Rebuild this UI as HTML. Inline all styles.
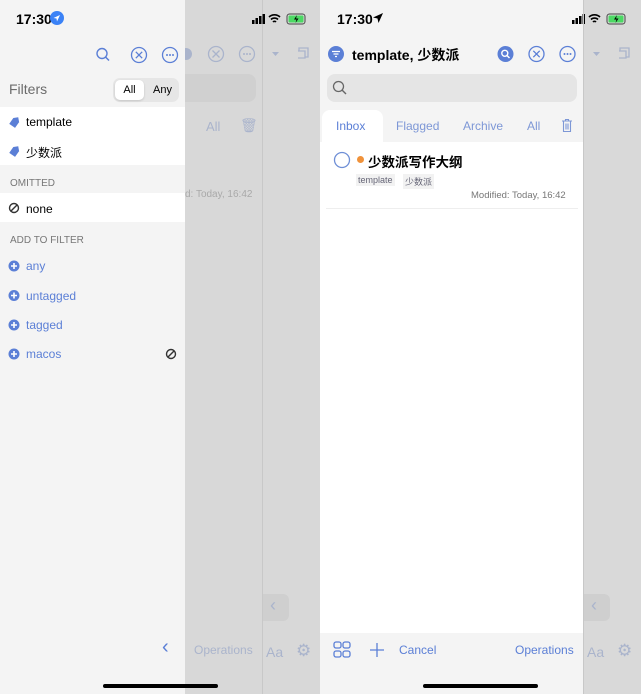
<!DOCTYPE html>
<html><head><meta charset="utf-8"><style>
*{margin:0;padding:0;box-sizing:border-box}
body{width:641px;height:694px;position:relative;overflow:hidden;background:#d9d9d9;font-family:"Liberation Sans","Noto Sans CJK SC",sans-serif;color:#000}
.a{position:absolute}
.blue{color:#5b7fd6}
.fb{color:#aab4cc}
.t{font-size:12px}
</style></head><body>
<!-- left screen -->
<div class="a" style="left:0;top:0;width:320px;height:694px;background:#d8d8d8"></div>
<div class="a" style="left:262px;top:0;width:1px;height:694px;background:#c8c8c8"></div>
<!-- faded content behind -->
<div class="a" style="left:185px;top:74px;width:71px;height:28px;background:#d0d0d0;border-radius:0 8px 8px 0"></div>
<div class="a fb" style="left:206px;top:119px;font-size:13px">All</div>
<div class="a fb" style="left:240px;top:117px;font-size:14px">🗑</div>
<div class="a" style="left:185px;top:189px;font-size:10px;color:#a9a9a9">d: Today, 16:42</div>
<div class="a fb" style="left:194px;top:643px;font-size:12px">Operations</div>
<div class="a fb" style="left:266px;top:644px;font-size:14px">Aa</div>
<div class="a fb" style="left:296px;top:641px;font-size:17px">⚙</div>
<div class="a" style="left:263px;top:594px;width:26px;height:27px;background:#cfcfcf;border-radius:0 6px 6px 0"></div>
<div class="a fb" style="left:270px;top:595px;font-size:18px">‹</div>
<svg class="a" style="left:180px;top:45px" width="140" height="20"><circle cx="6" cy="9" r="6" fill="#aab4cc"/><circle cx="36" cy="9" r="7.5" fill="none" stroke="#aab4cc" stroke-width="1.3"/><path d="M32.5 5.5l7 7M39.5 5.5l-7 7" stroke="#aab4cc" stroke-width="1.3"/><circle cx="67" cy="9" r="7.5" fill="none" stroke="#aab4cc" stroke-width="1.3"/><circle cx="64" cy="9" r="1" fill="#aab4cc"/><circle cx="67" cy="9" r="1" fill="#aab4cc"/><circle cx="70" cy="9" r="1" fill="#aab4cc"/><path d="M92 7h7l-3.5 4z" fill="#aab4cc"/><path d="M119 6v-3h9v9h-3M118 6h7v7h-7" fill="none" stroke="#aab4cc" stroke-width="1.3"/></svg>
<!-- drawer -->
<div class="a" style="left:0;top:0;width:185px;height:694px;background:#f4f4f4"></div>
<div class="a" style="left:16px;top:11px;font-size:14px;font-weight:bold">17:30</div>
<svg class="a" style="left:50px;top:11px" width="14" height="14"><circle cx="7" cy="7" r="7" fill="#3b82f6"/><path d="M10 4L3.5 7l3 .5.5 3z" fill="#fff"/></svg>
<svg class="a" style="left:252px;top:13px" width="56" height="12"><rect x="0" y="7" width="2.5" height="4" fill="#000"/><rect x="3.5" y="5" width="2.5" height="6" fill="#000"/><rect x="7" y="3" width="2.5" height="8" fill="#000"/><rect x="10.5" y="1" width="2.5" height="10" fill="#000"/><path d="M17 4a8 8 0 0 1 11 0M19 6.5a5 5 0 0 1 7 0M21 9a2 2 0 0 1 3 0" stroke="#000" stroke-width="1.6" fill="none"/><rect x="35" y="1" width="18" height="10" rx="2.5" fill="none" stroke="#444"/><rect x="36.5" y="2.5" width="15" height="7" rx="1" fill="#4cd964"/><path d="M45 2l-3 4.5h2.5l-1 3.5 3-4.5h-2.5z" fill="#000"/></svg>
<svg class="a" style="left:94px;top:46px" width="90" height="18"><circle cx="8" cy="7.5" r="5" fill="none" stroke="#5b7fd6" stroke-width="1.4"/><path d="M11.5 11l3.5 3.5" stroke="#5b7fd6" stroke-width="1.5"/><circle cx="45" cy="9" r="7.5" fill="none" stroke="#5b7fd6" stroke-width="1.3"/><path d="M41.8 5.8l6.4 6.4M48.2 5.8l-6.4 6.4" stroke="#5b7fd6" stroke-width="1.3"/><circle cx="76" cy="9" r="7.5" fill="none" stroke="#5b7fd6" stroke-width="1.3"/><circle cx="73" cy="9" r="1" fill="#5b7fd6"/><circle cx="76" cy="9" r="1" fill="#5b7fd6"/><circle cx="79" cy="9" r="1" fill="#5b7fd6"/></svg>
<div class="a" style="left:9px;top:81px;font-size:14px;color:#6b6b6b">Filters</div>
<div class="a" style="left:113px;top:78px;width:66px;height:24px;background:#e6e6e6;border-radius:7px"></div>
<div class="a" style="left:115px;top:80px;width:29px;height:20px;background:#fff;border-radius:5px;box-shadow:0 1px 2px rgba(0,0,0,.15);font-size:11px;text-align:center;line-height:20px">All</div>
<div class="a" style="left:153px;top:84px;font-size:11px">Any</div>
<div class="a" style="left:0;top:107px;width:185px;height:58px;background:#fff"></div>
<div class="a" style="left:0;top:193px;width:185px;height:29px;background:#fff"></div>
<svg class="a" style="left:8px;top:116px" width="12" height="12"><path d="M1 7L6 2h5v5l-5 5z" fill="#5b7fd6" transform="rotate(-10 6 6)"/></svg>
<div class="a t" style="left:26px;top:115px">template</div>
<svg class="a" style="left:8px;top:145px" width="12" height="12"><path d="M1 7L6 2h5v5l-5 5z" fill="#5b7fd6" transform="rotate(-10 6 6)"/></svg>
<div class="a t" style="left:26px;top:144px">少数派</div>
<div class="a" style="left:10px;top:178px;font-size:10px;color:#777">OMITTED</div>
<svg class="a" style="left:8px;top:202px" width="12" height="12"><circle cx="6" cy="6" r="4.5" fill="none" stroke="#333" stroke-width="1.4"/><path d="M3 9l6-6" stroke="#333" stroke-width="1.4"/></svg>
<div class="a t" style="left:26px;top:202px">none</div>
<div class="a" style="left:10px;top:235px;font-size:10px;color:#777">ADD TO FILTER</div>
<div id="adds"></div>
<svg class="a" style="left:8px;top:260px" width="12" height="100"><g fill="#5b7fd6"><circle cx="6" cy="6" r="5.5"/><circle cx="6" cy="35.5" r="5.5"/><circle cx="6" cy="65" r="5.5"/><circle cx="6" cy="94" r="5.5"/></g><g stroke="#fff" stroke-width="1.6"><path d="M3 6h6M6 3v6M3 35.5h6M6 32.5v6M3 65h6M6 62v6M3 94h6M6 91v6"/></g></svg>
<div class="a t blue" style="left:26px;top:259px">any</div>
<div class="a t blue" style="left:26px;top:289px">untagged</div>
<div class="a t blue" style="left:26px;top:318px">tagged</div>
<div class="a t blue" style="left:26px;top:347px">macos</div>
<svg class="a" style="left:165px;top:348px" width="12" height="12"><circle cx="6" cy="6" r="4.5" fill="none" stroke="#333" stroke-width="1.4"/><path d="M3 9l6-6" stroke="#333" stroke-width="1.4"/></svg>
<div class="a blue" style="left:162px;top:636px;font-size:20px">‹</div>
<div class="a" style="left:103px;top:684px;width:115px;height:4px;background:#000;border-radius:2px"></div>

<!-- right screen -->
<div class="a" style="left:320px;top:0;width:263px;height:694px;background:#f4f4f4"></div>
<div class="a" style="left:320px;top:142px;width:263px;height:491px;background:#fff"></div>
<div class="a" style="left:322px;top:110px;width:61px;height:34px;background:#fff;border-radius:8px 8px 0 0"></div>
<div class="a" style="left:337px;top:11px;font-size:14px;font-weight:bold">17:30</div>
<svg class="a" style="left:372px;top:12px" width="12" height="12"><path d="M11 1L1 5.5l4.5 1 1 4.5z" fill="#000"/></svg>
<svg class="a" style="left:572px;top:13px" width="56" height="12"><rect x="0" y="7" width="2.5" height="4" fill="#000"/><rect x="3.5" y="5" width="2.5" height="6" fill="#000"/><rect x="7" y="3" width="2.5" height="8" fill="#000"/><rect x="10.5" y="1" width="2.5" height="10" fill="#000"/><path d="M17 4a8 8 0 0 1 11 0M19 6.5a5 5 0 0 1 7 0M21 9a2 2 0 0 1 3 0" stroke="#000" stroke-width="1.6" fill="none"/><rect x="35" y="1" width="18" height="10" rx="2.5" fill="none" stroke="#444"/><rect x="36.5" y="2.5" width="15" height="7" rx="1" fill="#4cd964"/><path d="M45 2l-3 4.5h2.5l-1 3.5 3-4.5h-2.5z" fill="#000"/></svg>
<svg class="a" style="left:328px;top:46px" width="16" height="16"><circle cx="8" cy="8" r="8" fill="#5b7fd6"/><path d="M4 5.5h8M5.5 8h5M7 10.5h2" stroke="#fff" stroke-width="1.3"/></svg>
<div class="a" style="left:352px;top:45px;font-size:14px;font-weight:bold">template, 少数派</div>
<svg class="a" style="left:497px;top:45px" width="85" height="18"><circle cx="8.5" cy="9" r="8" fill="#5b7fd6"/><circle cx="7.8" cy="8.3" r="3" fill="none" stroke="#fff" stroke-width="1.4"/><path d="M10 10.5l2.5 2.5" stroke="#fff" stroke-width="1.5"/><circle cx="39.5" cy="9" r="7.5" fill="none" stroke="#5b7fd6" stroke-width="1.3"/><path d="M36.3 5.8l6.4 6.4M42.7 5.8l-6.4 6.4" stroke="#5b7fd6" stroke-width="1.3"/><circle cx="70.5" cy="9" r="7.5" fill="none" stroke="#5b7fd6" stroke-width="1.3"/><circle cx="67.5" cy="9" r="1" fill="#5b7fd6"/><circle cx="70.5" cy="9" r="1" fill="#5b7fd6"/><circle cx="73.5" cy="9" r="1" fill="#5b7fd6"/></svg>
<div class="a" style="left:327px;top:74px;width:250px;height:28px;background:#e5e5e5;border-radius:8px"></div>
<svg class="a" style="left:332px;top:80px" width="16" height="16"><circle cx="6.5" cy="6.5" r="5" fill="none" stroke="#666" stroke-width="1.3"/><path d="M10 10l4 4" stroke="#666" stroke-width="1.4"/></svg>
<div class="a blue" style="left:336px;top:119px;font-size:12px">Inbox</div>
<div class="a" style="left:396px;top:119px;font-size:12px;color:#7d97d6">Flagged</div>
<div class="a" style="left:463px;top:119px;font-size:12px;color:#7d97d6">Archive</div>
<div class="a" style="left:527px;top:119px;font-size:12px;color:#7d97d6">All</div>
<svg class="a" style="left:561px;top:118px" width="12" height="15"><path d="M1 3h10M4.5 3V1.5h3V3M2.5 3v10.5h7V3M5 5.5v6M7 5.5v6" fill="none" stroke="#7d97d6" stroke-width="1.1"/></svg>
<svg class="a" style="left:333px;top:151px" width="20" height="18"><circle cx="9" cy="9" r="7.5" fill="none" stroke="#6f8fd6" stroke-width="1.3"/></svg>
<div class="a" style="left:357px;top:156px;width:7px;height:7px;border-radius:50%;background:#f0923a"></div>
<div class="a" style="left:368px;top:151px;font-size:13.5px;font-weight:bold">少数派写作大纲</div>
<div class="a" style="left:356px;top:174px;font-size:9px;color:#667;background:#f2f2f2;padding:1px 2px">template</div>
<div class="a" style="left:403px;top:174px;font-size:9px;color:#667;background:#f2f2f2;padding:1px 2px">少数派</div>
<div class="a" style="left:471px;top:190px;font-size:9.5px;color:#777">Modified: Today, 16:42</div>
<div class="a" style="left:326px;top:208px;width:252px;height:1px;background:#eee"></div>
<svg class="a" style="left:333px;top:641px" width="54" height="18"><g fill="none" stroke="#5b7fd6" stroke-width="1.3"><rect x="1" y="1" width="7" height="6" rx="2"/><rect x="10" y="1" width="7" height="6" rx="2"/><rect x="1" y="10" width="7" height="6" rx="2"/><rect x="10" y="10" width="7" height="6" rx="2"/><path d="M44 2v14M37 9h14"/></g></svg>
<div class="a blue" style="left:399px;top:643px;font-size:12px">Cancel</div>
<div class="a blue" style="left:515px;top:643px;font-size:12px">Operations</div>
<div class="a" style="left:423px;top:684px;width:115px;height:4px;background:#000;border-radius:2px"></div>
<!-- right grey -->
<div class="a" style="left:583px;top:0;width:1px;height:694px;background:#c8c8c8"></div>
<svg class="a" style="left:588px;top:45px" width="50" height="20"><path d="M5 7h7l-3.5 4z" fill="#aab4cc"/><path d="M32 6v-3h9v9h-3M31 6h7v7h-7" fill="none" stroke="#aab4cc" stroke-width="1.3"/></svg>
<div class="a" style="left:584px;top:594px;width:26px;height:27px;background:#cfcfcf;border-radius:0 6px 6px 0"></div>
<div class="a fb" style="left:591px;top:595px;font-size:18px">‹</div>
<div class="a fb" style="left:587px;top:644px;font-size:14px">Aa</div>
<div class="a fb" style="left:617px;top:641px;font-size:17px">⚙</div>
</body></html>
